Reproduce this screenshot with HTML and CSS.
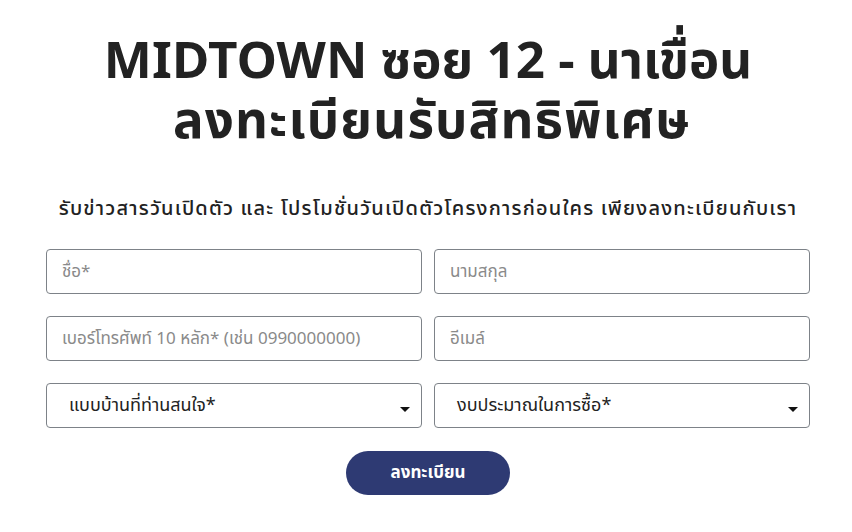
FILE: index.html
```html
<!DOCTYPE html>
<html lang="th">
<head>
<meta charset="utf-8">
<link rel="stylesheet" href="styles.css">
</head>
<body>
<main class="page">
  <h1 class="title"><span class="title-line">MIDTOWN ซอย 12 - นาเขื่อน</span><span class="title-line title-line-th">ลงทะเบียนรับสิทธิพิเศษ</span></h1>
  <p class="subtitle">รับข่าวสารวันเปิดตัว และ โปรโมชั่นวันเปิดตัวโครงการก่อนใคร เพียงลงทะเบียนกับเรา</p>
  <form class="form">
    <div class="grid">
      <input class="field" type="text" placeholder="ชื่อ*">
      <input class="field" type="text" placeholder="นามสกุล">
      <input class="field" type="text" placeholder="เบอร์โทรศัพท์ 10 หลัก* (เช่น 0990000000)">
      <input class="field" type="text" placeholder="อีเมล์">
      <div class="select"><span>แบบบ้านที่ท่านสนใจ*</span><i class="caret"></i></div>
      <div class="select"><span>งบประมาณในการซื้อ*</span><i class="caret"></i></div>
    </div>
    <button class="submit" type="button">ลงทะเบียน</button>
  </form>
</main>
</body>
</html>
```
FILE: styles.css
```css
* { box-sizing: border-box; }
html, body { margin: 0; padding: 0; background: #fff; }
body { font-family: "Noto Sans Thai", "Noto Sans Thai Looped", "Noto Sans", sans-serif; color: #222; }
.page { width: 852px; padding: 33px 0 0 4px; display: flex; flex-direction: column; align-items: center; }
.title { margin: 0; font-size: 51px; line-height: 60px; font-weight: 700; text-align: center; color: #222; display: flex; flex-direction: column; align-items: center; }
.title-line { display: block; white-space: nowrap; }
.title-line-th { letter-spacing: 1.2px; margin-left: 8px; }
.subtitle { margin: 42px 0 0; font-size: 20px; line-height: 28px; font-weight: 500; letter-spacing: 1.2px; color: #222; white-space: nowrap; }
.form { margin-top: 26px; width: 764px; display: flex; flex-direction: column; align-items: center; }
.grid { width: 100%; display: grid; grid-template-columns: 1fr 1fr; column-gap: 12px; row-gap: 22px; }
.field, .select { height: 45px; border: 1px solid #7d8288; border-radius: 4px; background: #fff; font-family: inherit; }
.field { padding: 0 15px; font-size: 17px; color: #222; outline: none; }
.field::placeholder { color: #8a8a8a; }
.select { display: flex; align-items: center; justify-content: space-between; padding: 0 11px 0 22px; font-size: 18px; color: #222; }
.caret { width: 0; height: 0; border-left: 5px solid transparent; border-right: 5px solid transparent; border-top: 5px solid #111; margin-top: 8px; }
.submit { margin-top: 23px; width: 164px; height: 44px; border: 0; border-radius: 22px; background: #2e3a73; color: #fff; font-family: inherit; font-size: 17px; font-weight: 700; }
```
